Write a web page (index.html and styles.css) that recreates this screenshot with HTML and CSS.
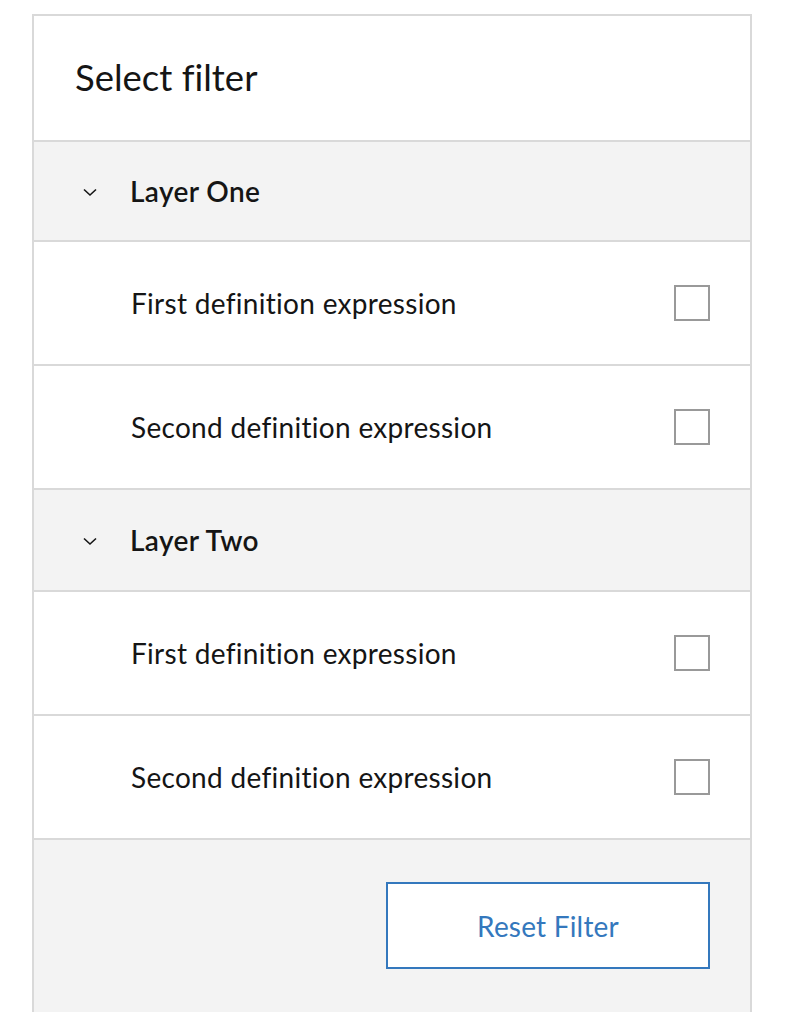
FILE: index.html
```html
<!DOCTYPE html>
<html lang="en">
<head>
<meta charset="utf-8">
<title>Select filter</title>
<link rel="stylesheet" href="styles.css">
</head>
<body>
<div class="panel">
  <div class="panel-header">Select filter</div>

  <div class="group">
    <div class="group-header">
      <svg class="chevron" width="16" height="10" viewBox="0 0 16 10"><path d="M2 2.5 L8 8 L14 2.5" fill="none" stroke="#151515" stroke-width="1.6"/></svg>
      <span>Layer One</span>
    </div>
    <div class="row"><span>First definition expression</span><span class="checkbox"></span></div>
    <div class="row"><span>Second definition expression</span><span class="checkbox"></span></div>
  </div>

  <div class="group">
    <div class="group-header">
      <svg class="chevron" width="16" height="10" viewBox="0 0 16 10"><path d="M2 2.5 L8 8 L14 2.5" fill="none" stroke="#151515" stroke-width="1.6"/></svg>
      <span>Layer Two</span>
    </div>
    <div class="row"><span>First definition expression</span><span class="checkbox"></span></div>
    <div class="row"><span>Second definition expression</span><span class="checkbox"></span></div>
  </div>

  <div class="panel-footer">
    <button class="reset-btn">Reset Filter</button>
  </div>
</div>
</body>
</html>
```

FILE: styles.css
```css
html, body {
  margin: 0;
  padding: 0;
  background: #ffffff;
}

body {
  font-family: Lato, "Open Sans", sans-serif;
  color: #151515;
  font-variant-ligatures: none;
}

.panel {
  box-sizing: border-box;
  width: 720px;
  margin: 14px 0 0 32px;
  border: 2px solid #d9d9d9;
  border-bottom: none;
  background: #ffffff;
}

.panel-header {
  height: 124px;
  display: flex;
  align-items: center;
  padding-left: 41px;
  padding-bottom: 3px;
  box-sizing: border-box;
  height: 126px;
  font-size: 36.5px;
  font-weight: 400;
  letter-spacing: 0;
  border-bottom: 2px solid #d9d9d9;
}

.group-header {
  height: 98px;
  display: flex;
  align-items: center;
  background: #f3f3f3;
  border-bottom: 2px solid #d9d9d9;
  padding-left: 48px;
  font-size: 28px;
  font-weight: 600;
  letter-spacing: 0.4px;
}

.group + .group .group-header {
  height: 100px;
}

.chevron {
  display: block;
  margin-right: 32px;
  margin-top: 2px;
}

.row {
  height: 122px;
  display: flex;
  align-items: center;
  justify-content: space-between;
  padding: 0 40px 0 97px;
  border-bottom: 2px solid #d9d9d9;
  font-size: 28px;
  font-weight: 400;
  letter-spacing: 0.3px;
}

.checkbox {
  box-sizing: border-box;
  width: 36px;
  height: 36px;
  border: 2px solid #999999;
  background: #ffffff;
}

.panel-footer {
  background: #f3f3f3;
  display: flex;
  justify-content: flex-end;
  padding: 42px 40px 80px;
}

.reset-btn {
  box-sizing: border-box;
  width: 324px;
  height: 87px;
  border: 2px solid #3478bd;
  background: #ffffff;
  color: #3478bd;
  font-family: Lato, "Open Sans", sans-serif;
  font-variant-ligatures: none;
  font-size: 28px;
  font-weight: 400;
  letter-spacing: 0.2px;
  cursor: pointer;
}
```
